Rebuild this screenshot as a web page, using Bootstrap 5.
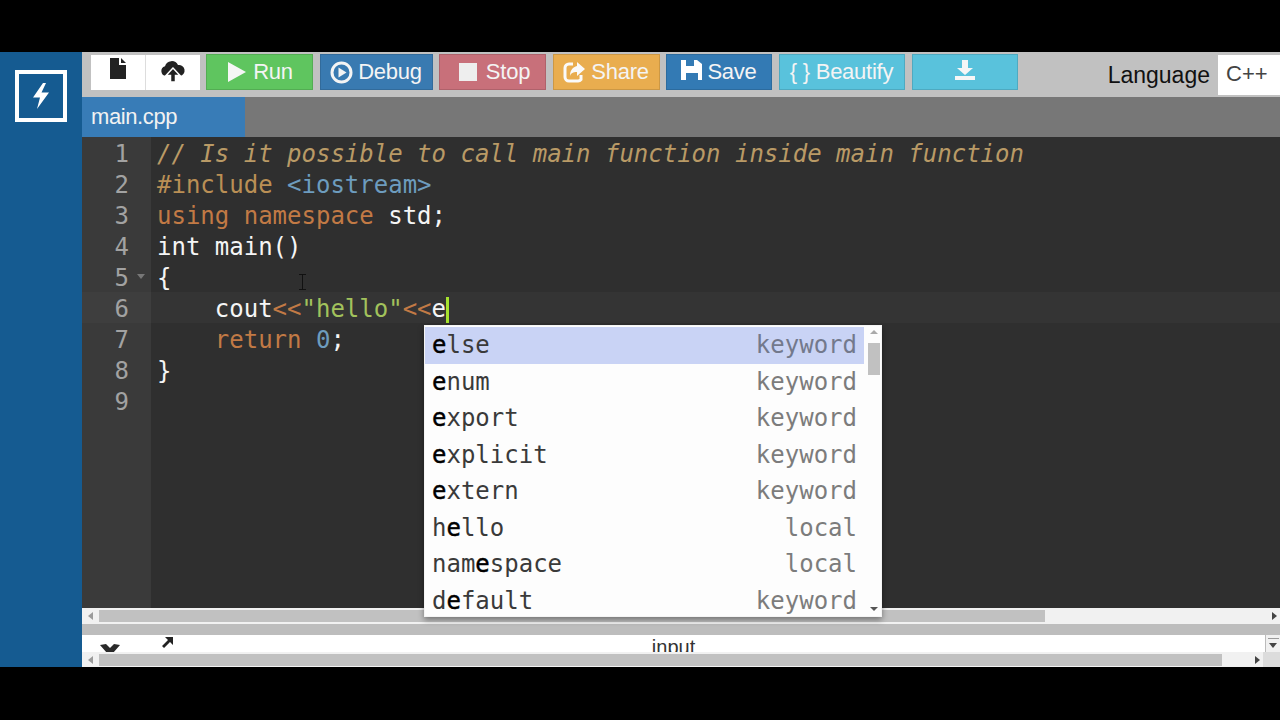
<!doctype html>
<html lang="en"><head><meta charset="utf-8"><title>main.cpp</title>
<link rel="stylesheet" href="https://cdn.jsdelivr.net/npm/bootstrap@5.3.0/dist/css/bootstrap.min.css">
<style>
html,body{height:720px;overflow:hidden;background:#000}
body{font-family:"Liberation Sans",Arial,sans-serif;padding-top:52px}
.app-shell{height:615px;position:relative}
.side-rail{width:82px;background:#155b91;padding:18px 0 0 15px;flex:none}
.logo-box{width:52px;height:52px;border:4px solid #fff;display:flex;align-items:center;justify-content:center}
.main-pane{width:1198px;min-width:0}
.tool-bar{height:45px;background:#c1c1c1;padding:2px 0 0 9px}
.file-group{width:109px;height:35px;background:#fff;margin-top:1px;margin-right:6px}
.file-group>div{width:54px;display:flex;align-items:center;justify-content:center}
.file-group>div+div{border-left:1px solid #ddd;flex:1}
.act{height:36px;border-radius:0;padding:0;font-size:22px;line-height:34px;color:#f4f4f4;border:1px solid rgba(0,0,0,.12);display:flex;align-items:center;justify-content:center;gap:5px;margin-right:6.5px;letter-spacing:-.25px}
.act svg{flex:none}
.a-run{width:107px;background:#5fc55f}.a-debug{width:113px;background:#397ab1}.a-stop{width:107px;background:#c8707a}
.a-share{width:107px;background:#e9ad4f}.a-save{width:106px;background:#337ab4}.a-beaut{width:126px;background:#59c2dc;margin-right:7px}.a-dl{width:106px;background:#59c2dc}
.lang-lbl{font-size:23px;color:#111;margin-left:auto;margin-right:8px;line-height:42px}
.lang-val{width:62px;height:40px;background:#fff;color:#444;font-size:22px;line-height:38px;padding-left:8px;margin-top:1px}
.tab-strip{height:40px;background:#777}
.file-tab{width:163px;background:#387cb7;color:#f2f2f2;font-size:22px;line-height:40px;padding-left:9px;letter-spacing:-.4px}
.code-area{height:471px;background:#2f2f2f;font-family:"DejaVu Sans Mono",monospace;font-size:24px;line-height:31px}
.gutter-col{width:69px;background:#3a3a3a;color:#a2a2a2;flex:none;text-align:right;padding-right:22px}
.gutter-col>div{position:relative}
.fold-mark{position:absolute;left:55px;top:13px;width:0;height:0;border:4px solid transparent;border-top:5px solid #777;border-bottom:0}
.code-col{flex:1;color:#f5f5f5;padding-left:6px;min-width:0}
.ln{height:31px;white-space:pre;padding-top:2px}
.ln-active{background:#343434;margin-left:-6px;padding-left:6px}
.gn-active{background:#3e3e3e;margin-right:-22px;padding-right:22px}
.t-com{color:#b99a66;font-style:italic}.t-inc{color:#ba8f55}.t-str{color:#6d9cbe}.t-kw{color:#c27a45}.t-s{color:#a2c25c}.t-num{color:#6d9cbe}
.caret-bar{display:inline-block;width:3px;height:26px;background:#a6e22e;vertical-align:-6px}
.hscroll{height:16px;background:#f1f1f1;padding:2px 0;position:relative}
.h-thumb{height:12px;background:#c1c1c1;margin-left:17px}
.arr-l,.arr-r{position:absolute;top:4px;width:0;height:0;border:4px solid transparent}
.arr-l{border-right:5px solid #9b9b9b;border-left:0;left:6px}
.arr-r{border-left:5px solid #444;border-right:0}
.grey-band{height:11px;background:#bdbdbd}
.io-head{height:17px;background:#fff;position:relative;overflow:hidden;text-align:center;font-size:20px;line-height:24px;color:#333;padding-right:15px}
.io-x{position:absolute;left:17px;top:9px}
.io-arrow{position:absolute;left:79px;top:2px}
.io-drop{position:absolute;right:0;top:0;width:15px;height:17px;background:#f0f0f0;border-left:1px solid #bbb}
.io-drop:before{content:"";position:absolute;left:2px;right:1px;top:3px;border-top:1px solid #999}
.io-drop:after{content:"";position:absolute;left:3px;top:8px;border:4px solid transparent;border-top:5px solid #444;border-bottom:0}
.corner-box{position:absolute;right:0;top:0;width:17px;height:15px;background:#dcdcdc}
.hint-pop{position:absolute;left:424px;top:273px;width:458px;height:292px;background:#fdfdfd;box-shadow:0 3px 6px rgba(0,0,0,.4);font-family:"DejaVu Sans Mono",monospace;font-size:24px;overflow:hidden;padding-top:1px;border:1px solid #f4f4f4}
.hint-row{height:36.5px;line-height:37.500px;padding:0 7px;width:439px;display:flex;justify-content:space-between;color:#3a3a3a;white-space:pre}
.hint-row b{font-weight:400;color:#000;-webkit-text-stroke:.45px #000}
.hint-row span:last-child{color:#7c7c7c}
.hint-on{background:#c9d3f5}
.hint-on span:last-child{color:#73798c}
.vtrack{position:absolute;right:0;top:0;bottom:0;width:18px}
.v-thumb{position:absolute;left:5px;top:17px;width:12px;height:32px;background:#c1c1c1}
.v-up,.v-dn{position:absolute;left:7px;width:0;height:0;border:4px solid transparent}
.v-up{top:4px;border-bottom:4px solid #aaa;border-top:0}
.v-dn{bottom:5px;border-top:4px solid #555;border-bottom:0}
.ibeam{position:absolute;left:298px;top:222px}
</style></head>
<body>
<div class="app-shell d-flex">
  <div class="side-rail"><div class="logo-box">
    <svg width="20" height="28" viewBox="0 0 20 28"><path d="M12 1 2 15.500h7L6 27 18 10.500h-7.500L15 1z" fill="#fff"/></svg>
  </div></div>
  <div class="main-pane d-flex flex-column">
    <div class="tool-bar d-flex">
      <div class="file-group d-flex">
        <div><svg class="mb-2" width="18" height="24" viewBox="0 0 18 24"><path d="M1 1h9v7h7v14H1z" fill="#222"/><path d="M12 1l5 5h-5z" fill="#222"/></svg></div>
        <div><svg class="mb-1" width="26" height="24" viewBox="0 0 26 24"><path d="M7 17H6a5 5 0 0 1-1-9.800A7 7 0 0 1 18 6a5.500 5.500 0 0 1 2 11H7z" fill="#222"/><path d="M13 9l-7 7.500h4.500V23h5v-6.500H20z" fill="#222" stroke="#fff" stroke-width="1.500"/></svg></div>
      </div>
      <button class="btn act a-run" type="button"><svg width="22" height="22" viewBox="0 0 22 22"><path d="M2 1l18 10L2 21z" fill="#f6f6f6"/></svg>Run</button>
      <button class="btn act a-debug" type="button"><svg width="23" height="23" viewBox="0 0 23 23"><circle cx="11.500" cy="11.500" r="9.500" fill="none" stroke="#f4f4f4" stroke-width="3"/><path d="M8.500 6.500l8 5-8 5z" fill="#f4f4f4"/></svg>Debug</button>
      <button class="btn act a-stop ps-1" type="button"><svg width="18" height="18" viewBox="0 0 18 18"><rect width="18" height="18" fill="#eee"/></svg><span class="ms-1">Stop</span></button>
      <button class="btn act a-share" type="button"><svg width="23" height="22" viewBox="0 0 23 22"><path d="M10 3H6a4 4 0 0 0-4 4v9a4 4 0 0 0 4 4h9a4 4 0 0 0 3-1.500V14" fill="none" stroke="#fafafa" stroke-width="3"/><path d="M14 1l8 7-8 7v-4c-4 0-6 1-7 4 0-6 3-9 7-10z" fill="#fafafa"/></svg>Share</button>
      <button class="btn act a-save" type="button"><svg class="mb-1" width="21" height="20" viewBox="0 0 21 20"><path d="M0 0h5v6h8V0h3l5 4v16h-4v-7H5v7H0z" fill="#fff"/></svg>Save</button>
      <button class="btn act a-beaut" type="button">{ } Beautify</button>
      <button class="btn act a-dl" type="button"><svg class="mb-1" width="22" height="22" viewBox="0 0 22 22"><path d="M8 1h6v8h5l-8 7-8-7h5zM1 17h20v4H1z" fill="#f6f6f6"/></svg></button>
      <div class="lang-lbl">Language</div>
      <div class="lang-val">C++</div>
    </div>
    <div class="tab-strip d-flex"><div class="file-tab">main.cpp</div></div>
    <div class="code-area d-flex">
      <div class="gutter-col">
        <div class="ln">1</div><div class="ln">2</div><div class="ln">3</div><div class="ln">4</div>
        <div class="ln">5<i class="fold-mark"></i></div>
        <div class="ln gn-active">6</div><div class="ln">7</div><div class="ln">8</div><div class="ln">9</div>
      </div>
      <div class="code-col">
        <div class="ln"><span class="t-com">// Is it possible to call main function inside main function</span></div>
        <div class="ln"><span class="t-inc">#include</span> <span class="t-str">&lt;iostream&gt;</span></div>
        <div class="ln"><span class="t-kw">using</span> <span class="t-kw">namespace</span> std;</div>
        <div class="ln">int main()</div>
        <div class="ln">{</div>
        <div class="ln ln-active">    cout<span class="t-kw">&lt;&lt;</span><span class="t-s">"hello"</span><span class="t-kw">&lt;&lt;</span>e<i class="caret-bar"></i></div>
        <div class="ln">    <span class="t-kw">return</span> <span class="t-num">0</span>;</div>
        <div class="ln">}</div>
      </div>
    </div>
    <div class="hscroll"><i class="arr-l"></i><div class="h-thumb" style="width:946px"></div><i class="arr-r" style="right:3px"></i></div>
    <div class="grey-band"></div>
    <div class="io-head">input
      <svg class="io-x" width="22" height="12" viewBox="0 0 22 12"><path d="M1 1l6-1 4 4 4-4 6 1-7 8H8z" fill="#2a2a2a"/></svg>
      <svg class="io-arrow" width="12" height="12" viewBox="0 0 12 12"><path d="M4 0h8v8L9 5 3 11 1 9l6-6z" fill="#222"/></svg>
      <i class="io-drop"></i>
    </div>
    <div class="hscroll" style="height:15px"><i class="arr-l"></i><div class="h-thumb" style="width:1123px"></div><i class="arr-r" style="right:20px"></i><i class="corner-box"></i></div>
  </div>
  <div class="hint-pop">
    <div class="hint-row hint-on"><span><b>e</b>lse</span><span>keyword</span></div>
    <div class="hint-row"><span><b>e</b>num</span><span>keyword</span></div>
    <div class="hint-row"><span><b>e</b>xport</span><span>keyword</span></div>
    <div class="hint-row"><span><b>e</b>xplicit</span><span>keyword</span></div>
    <div class="hint-row"><span><b>e</b>xtern</span><span>keyword</span></div>
    <div class="hint-row"><span>h<b>e</b>llo</span><span>local</span></div>
    <div class="hint-row"><span>nam<b>e</b>space</span><span>local</span></div>
    <div class="hint-row"><span>d<b>e</b>fault</span><span>keyword</span></div>
    <div class="vtrack"><i class="v-up"></i><i class="v-thumb"></i><i class="v-dn"></i></div>
  </div>
  <svg class="ibeam" width="9" height="16" viewBox="0 0 9 16"><path d="M1 .5h7M1 15.500h7M4.500 .5v15" stroke="#111" stroke-width="1" fill="none"/></svg>
</div>
<script src="https://cdn.jsdelivr.net/npm/bootstrap@5.3.0/dist/js/bootstrap.bundle.min.js"></script>
</body></html>
